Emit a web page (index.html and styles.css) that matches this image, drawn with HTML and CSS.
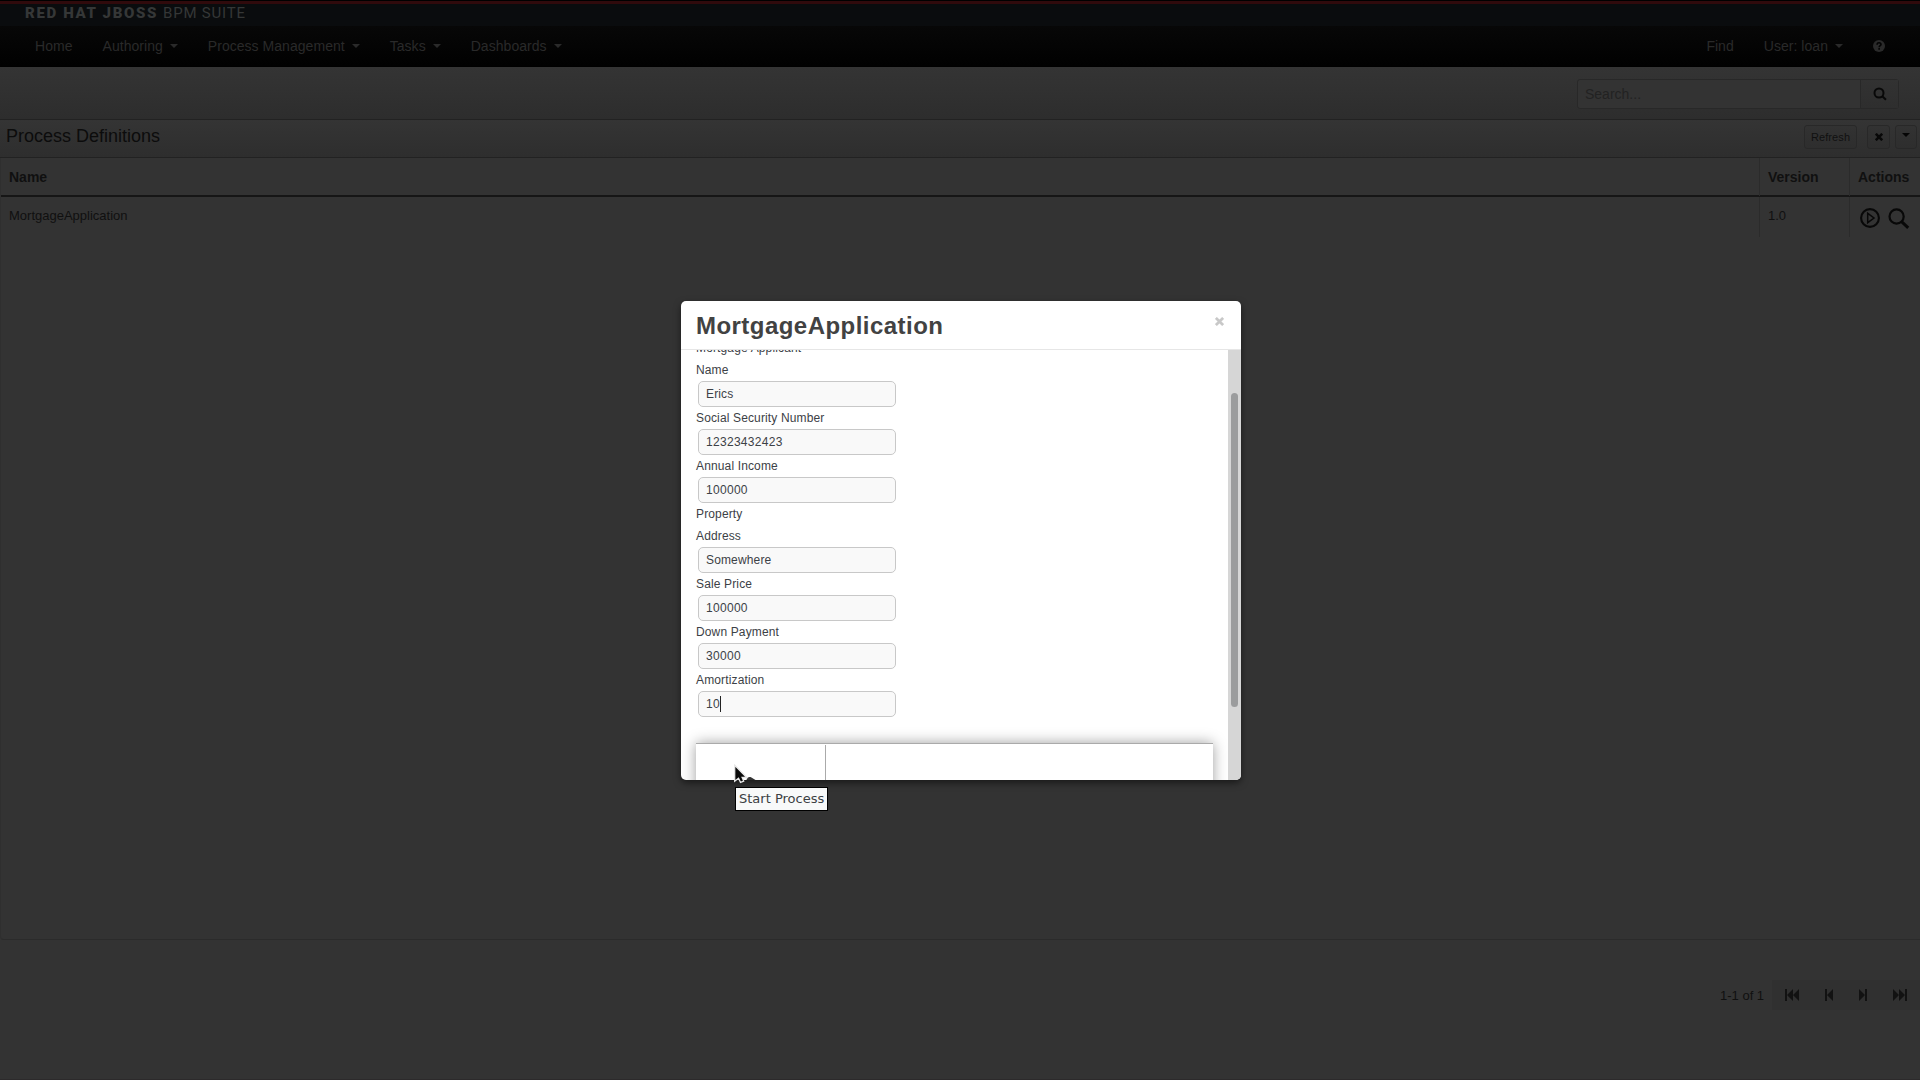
FILE: index.html
```html
<!DOCTYPE html>
<html lang="en">
<head>
<meta charset="utf-8">
<title>Process Definitions</title>
<link rel="stylesheet" href="styles.css">
</head>
<body>
<div class="page">
  <div class="brand"><span class="brand-bold">RED HAT JBOSS</span><span class="brand-light">BPM SUITE</span></div>
  <nav class="nav">
    <span class="nav-item">Home</span>
    <span class="nav-item">Authoring<i class="caret"></i></span>
    <span class="nav-item">Process Management<i class="caret"></i></span>
    <span class="nav-item">Tasks<i class="caret"></i></span>
    <span class="nav-item">Dashboards<i class="caret"></i></span>
    <span class="nav-item push">Find</span>
    <span class="nav-item">User: loan<i class="caret"></i></span>
    <svg class="help" viewBox="0 0 12 12" width="12" height="12"><circle cx="6" cy="6" r="6" fill="#2a2a2a"/><path d="M4.1 4.7C4.1 3.3 5 2.8 6 2.8s2 .6 2 1.7C8 5.7 6.2 5.8 6.2 7.2" fill="none" stroke="#030303" stroke-width="1.6"/><rect x="5.3" y="8.1" width="1.7" height="1.6" fill="#030303"/></svg>
  </nav>
  <div class="toolbar">
    <div class="search"><span class="search-text">Search...</span><span class="search-btn"><svg viewBox="0 0 14 14" width="14" height="14" fill="none" stroke="#080808" stroke-width="2"><circle cx="6" cy="6" r="4.5"/><path d="M9.2 9.2l3.8 3.6"/></svg></span></div>
  </div>
  <div class="panel-head">
    <h1 class="panel-title">Process Definitions</h1>
    <span class="btn refresh">Refresh</span>
    <span class="btn close-panel"><svg viewBox="0 0 8 8" width="8" height="8" stroke="#080808" stroke-width="2.6"><path d="M.8.8l6.4 6.4M7.2.8L.8 7.2"/></svg></span>
    <span class="btn menu"><i class="caret dark"></i></span>
  </div>
  <div class="table">
    <div class="row head"><div class="cell">Name</div><div class="cell">Version</div><div class="cell">Actions</div></div>
    <div class="row"><div class="cell">MortgageApplication</div><div class="cell">1.0</div>
      <div class="cell icons">
        <svg viewBox="0 0 20 20" width="20" height="20" fill="none" stroke="#080808"><circle cx="10" cy="10" r="8.9" stroke-width="2.1"/><path d="M7.7 5.3v9.4l6.3-4.7z" stroke-width="1.5"/></svg>
        <svg viewBox="0 0 22 21" width="22" height="21" fill="none" stroke="#080808"><circle cx="8.6" cy="8.5" r="7.1" stroke-width="2.2"/><path d="M13.6 13.6l6.6 6.2" stroke-width="3"/></svg>
      </div></div>
  </div>
  <div class="footer">
    <span class="count">1-1 of 1</span>
    <div class="pager">
      <svg viewBox="0 0 148 30" width="148" height="30" fill="#121212"><path d="M13 9h2v12h-2zM21 9v12l-6-6zM27 9v12l-6-6zM53 9h2v12h-2zM61 9v12l-6-6zM87 9v12l6-6zM93 9h2v12h-2zM121 9v12l6-6zM127 9v12l6-6zM133 9h2v12h-2z"/></svg>
    </div>
  </div>
</div>

<div class="modal">
  <div class="modal-head"><h2 class="modal-title">MortgageApplication</h2>
    <svg class="modal-close" viewBox="0 0 9 9" width="9" height="9" stroke="#c8c8c8" stroke-width="2.7"><path d="M.9.9l7.2 7.2M8.1.9L.9 8.1"/></svg></div>
  <div class="modal-body">
    <div class="form">
      <div class="label">Mortgage Applicant</div>
      <div class="label">Name</div><div class="field text">Erics</div>
      <div class="label">Social Security Number</div><div class="field">12323432423</div>
      <div class="label">Annual Income</div><div class="field">100000</div>
      <div class="label">Property</div>
      <div class="label">Address</div><div class="field text">Somewhere</div>
      <div class="label">Sale Price</div><div class="field">100000</div>
      <div class="label">Down Payment</div><div class="field">30000</div>
      <div class="label">Amortization</div><div class="field">10<i class="text-cursor"></i></div>
      <div class="actions"><div class="action-first"></div></div>
    </div>
    <div class="scrollbar"><div class="thumb"></div></div>
  </div>
</div>
<svg class="pointer" viewBox="0 0 24 20" width="24" height="20"><path d="M12.5 16c.3-2.600 2.500-3.600 4.500-2.800l4.500 2.800z" fill="#333"/><path d="M.7 1.200v16l3.800-3 2 4.200 3.200-1.300-1.600-3.600h4.600z" fill="#0a0a0a" stroke="#e8e8e8" stroke-width="1.300"/></svg>
<div class="tooltip">Start Process</div>
</body>
</html>
```
FILE: styles.css
```css
* { box-sizing: border-box; }
body { margin: 0; width: 1920px; height: 1080px; overflow: hidden; background: #333; font: 13px "Liberation Sans", Arial, sans-serif; color: #101010; }
svg { display: block; flex: none; }
.page { display: flex; flex-direction: column; height: 1080px; border-bottom: 1px solid #2c2a2b; }

.brand { height: 26px; flex: none; border-top: 1px solid #000; background: linear-gradient(#300a0c 3px, #0a0c0e 3px); display: flex; padding: 3px 0 0 25px; font: 15px/18px Roboto, sans-serif; color: #353737; white-space: nowrap; }
.brand-bold { font-weight: 900; letter-spacing: 1.65px; width: 138px; }
.brand-light { letter-spacing: .8px; }

.nav { height: 41px; flex: none; background: linear-gradient(#070707, #010101); border-bottom: 1px solid #000; display: flex; align-items: center; gap: 30px; padding: 0 35px; font-size: 14px; color: #2a2a2a; }
.nav-item { display: flex; align-items: center; letter-spacing: .04px; white-space: nowrap; }
.push { margin-left: auto; }
.caret { border: 4px solid transparent; border-top-color: #2a2a2a; border-bottom: 0; margin-left: 7px; }
.caret.dark { border-top-color: #050505; margin: 0; }

.toolbar { height: 53px; flex: none; background: linear-gradient(#343434, #2d2d2d); border-bottom: 1px solid #222; display: flex; justify-content: flex-end; padding: 12px 21px 0 0; }
.search { width: 322px; height: 30px; border: 1px solid #282828; border-radius: 3px; display: flex; background: #333; }
.search-text { flex: 1; padding-left: 7px; font-size: 14px; line-height: 28px; color: #222; }
.search-btn { width: 38px; border-left: 1px solid #282828; background: linear-gradient(#323232, #2e2e2e); display: flex; align-items: center; justify-content: center; }

.panel-head { height: 38px; flex: none; background: linear-gradient(#343434, #2e2e2e); border-bottom: 1px solid #222; display: flex; align-items: flex-start; padding: 5px 3px 0 6px; }
.panel-title { flex: 1; margin: 0; font-size: 18px; font-weight: 400; line-height: 22px; color: #0c0c0c; }
.btn { height: 24px; border: 1px solid #282828; border-radius: 3px; background: linear-gradient(#323232, #2e2e2e); display: flex; align-items: center; justify-content: center; font-size: 11px; color: #101010; }
.refresh { width: 53px; margin-right: 10px; letter-spacing: .1px; }
.close-panel { width: 23px; margin-right: 5px; }
.menu { width: 22px; padding-bottom: 4px; }

.table { height: 782px; flex: none; border-bottom: 1px solid #2b2b2b; border-left: 1px solid #2f2f2f; border-radius: 0 0 0 4px; }
.row { display: grid; grid-template-columns: 1758px 90px 1fr; height: 40px; }
.row.head { height: 39px; border-bottom: 2px solid #161616; font-weight: 700; font-size: 14px; }
.cell { padding: 0 8px; line-height: 37px; }
.cell + .cell { border-left: 1px solid #2b2b2b; }
.head .cell { line-height: 38px; }
.icons { display: flex; gap: 8px; padding: 11px 0 0 10px; }

.footer { display: flex; justify-content: flex-end; padding-top: 40px; height: 139px; }
.count { line-height: 31px; width: 52px; }
.pager { width: 148px; height: 30px; background: #303030; }

.modal { position: absolute; left: 681px; top: 301px; width: 560px; height: 479px; background: #fff; border-radius: 5px; overflow: hidden; display: flex; flex-direction: column; box-shadow: 0 3px 7px rgba(0, 0, 0, .5); color: #3c4146; }
.modal-head { height: 49px; flex: none; border-bottom: 1px solid #e6e6e6; display: flex; justify-content: space-between; padding: 10px 17px 0 15px; }
.modal-title { margin: 0; font-size: 24px; line-height: 30px; letter-spacing: .46px; color: #424242; }
.modal-close { margin-top: 6px; }
.modal-body { flex: 1; min-height: 0; display: flex; overflow: hidden; }
.form { flex: 1; margin-top: -13px; padding: 0 15px; }
.label { height: 22px; line-height: 23px; font-size: 12px; letter-spacing: .14px; }
.field { width: 198px; height: 26px; margin-left: 2px; padding-left: 7px; border: 1px solid #c8c8c8; border-radius: 5px; background: #f9f9f9; font-size: 12px; line-height: 25px; letter-spacing: .3px; display: flex; align-items: center; }
.field.text { letter-spacing: .15px; }
.text-cursor { width: 1px; height: 16px; background: #222; }
.actions { margin-top: 26px; height: 60px; border-top: 1px solid #aaa; box-shadow: 0 0 13px rgba(0, 0, 0, .38); background: #fff; padding-top: 1px; }
.action-first { width: 130px; height: 60px; border-right: 1px solid #aaa; }
.scrollbar { width: 13px; background: #d6d6d6; padding: 43px 3px 0; }
.thumb { width: 7px; height: 314px; border-radius: 4px; background: #9b9c9d; }

.pointer { position: absolute; left: 734px; top: 764px; }
.tooltip { position: absolute; left: 735px; top: 787px; width: 93px; height: 24px; border: 1px solid #000; background: #f8f9f9; color: #3b4043; font: 13px/22px "DejaVu Sans", sans-serif; padding-left: 3px; white-space: nowrap; }
```
